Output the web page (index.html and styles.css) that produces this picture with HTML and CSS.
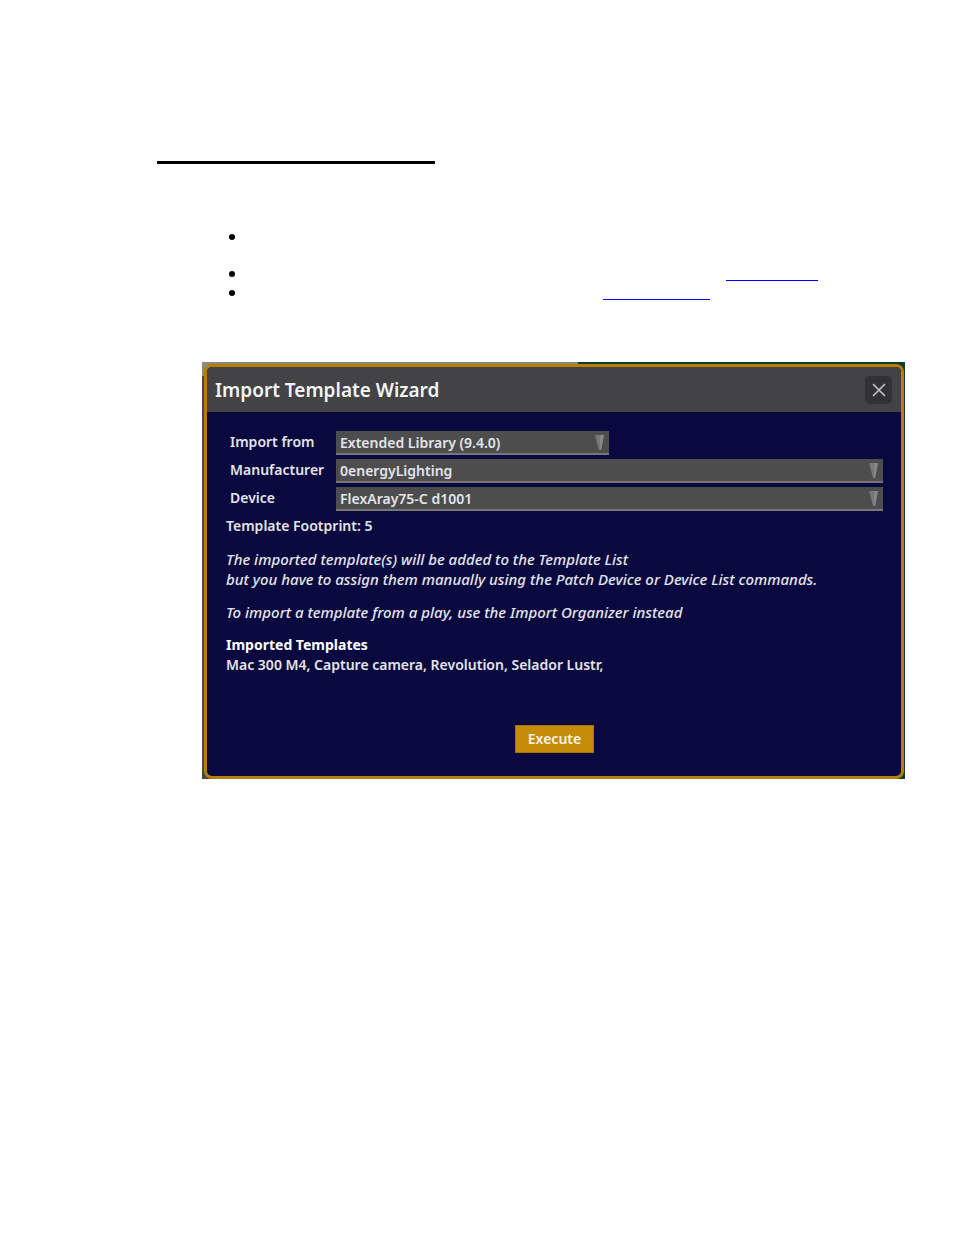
FILE: index.html
```
<!DOCTYPE html>
<html lang="en">
<head>
    <meta charset="UTF-8">
    <meta name="viewport" content="width=device-width, initial-scale=1.0">
    <title>Import Template Wizard</title>
    <link rel="stylesheet" href="styles.css">
</head>
<body>

<main class="page">
    <div class="title-rule"></div>

    <ul class="notes">
        <li class="tall"></li>
        <li><a href="#" class="link-first" aria-label="Template List"></a></li>
        <li><a href="#" class="link-second" aria-label="Import Organizer"></a></li>
    </ul>

    <div class="stage">
        <section class="wizard">
            <header class="wizard-header">
                <h1>Import Template Wizard</h1>
                <button type="button" class="close" aria-label="Close">
                    <svg width="14" height="14" viewBox="0 0 14 14"><path d="M1 1 L13 13 M13 1 L1 13" stroke="#c4c4c6" stroke-width="1.6" fill="none"/></svg>
                </button>
            </header>

            <form class="wizard-body">
                <div class="row">
                    <label for="source">Import from</label>
                    <div class="select short">
                        <select id="source"><option>Extended Library (9.4.0)</option></select>
                        <svg class="arrow" width="10" height="16" viewBox="0 0 10 16"><path d="M0 0 H9 L6 15 H4 Z" fill="#77777b"/><path d="M5 0 H9 L6 15 H5 Z" fill="#88888c"/></svg>
                    </div>
                </div>
                <div class="row">
                    <label for="manufacturer">Manufacturer</label>
                    <div class="select">
                        <select id="manufacturer"><option>0energyLighting</option></select>
                        <svg class="arrow" width="10" height="16" viewBox="0 0 10 16"><path d="M0 0 H9 L6 15 H4 Z" fill="#77777b"/><path d="M5 0 H9 L6 15 H5 Z" fill="#88888c"/></svg>
                    </div>
                </div>
                <div class="row">
                    <label for="device">Device</label>
                    <div class="select">
                        <select id="device"><option>FlexAray75-C d1001</option></select>
                        <svg class="arrow" width="10" height="16" viewBox="0 0 10 16"><path d="M0 0 H9 L6 15 H4 Z" fill="#77777b"/><path d="M5 0 H9 L6 15 H5 Z" fill="#88888c"/></svg>
                    </div>
                </div>

                <div class="info">
                    <p>Template Footprint: 5</p>
                    <p class="hint">The imported template(s) will be added to the Template List<br>but you have to assign them manually using the Patch Device or Device List commands.</p>
                    <p class="hint">To import a template from a play, use the Import Organizer instead</p>
                    <h2>Imported Templates</h2>
                    <p>Mac 300 M4, Capture camera, Revolution, Selador Lustr,</p>
                </div>

                <button type="button" class="execute">Execute</button>
            </form>
        </section>
    </div>
</main>

</body>
</html>
```

FILE: styles.css
```
* {
    box-sizing: border-box;
}

body {
    margin: 0;
    background-color: #fff;
    color: #e4e4ea;
    font-family: "Noto Sans", "Open Sans", sans-serif;
    font-size: 14px;
    line-height: 20px;
}

h1, h2, p {
    margin: 0;
}

.page {
    padding: 161px 49px 0 157px;
}

.title-rule {
    width: 278px;
    height: 3px;
    background-color: #000;
}

/* Bullet list above the wizard */
.notes {
    list-style: none;
    margin: 63px 0 0 72px;
    padding: 0;
}

.notes li {
    display: flex;
    height: 19px;
}

.notes li::before {
    content: "";
    width: 6px;
    height: 6px;
    margin-top: 7px;
    border-radius: 50%;
    background-color: #000;
}

.notes .tall {
    height: 37px;
}

.notes a {
    height: 17px;
    border-bottom: 1px solid #0000ff;
}

.link-first {
    width: 92px;
    margin-left: 491px;
}

.link-second {
    width: 107px;
    margin-left: 368px;
}

/* Strip of the desk visible behind the wizard */
.stage {
    margin: 60px 0 0 45px;
    padding: 2px 1px 0 2px;
    background: linear-gradient(to right, #8a8a80 376px, #123c2c 376px) top / 100% 14px no-repeat, linear-gradient(to right, #48484a 50%, #123c2c 50%);
}

.wizard {
    border: 3px solid #b57f05;
    border-radius: 8px;
    background-color: #09083f;
    overflow: hidden;
}

.wizard-header {
    display: flex;
    align-items: center;
    justify-content: space-between;
    height: 45px;
    padding: 0 9px 0 8px;
    background-color: #434244;
}

.wizard-header h1 {
    color: #f4f4f4;
    font-size: 19px;
    font-weight: 600;
    line-height: 24px;
}

.close {
    display: flex;
    align-items: center;
    justify-content: center;
    width: 27px;
    height: 28px;
    padding: 0;
    border: none;
    border-radius: 5px;
    background-color: #323234;
}

.wizard-body {
    display: flex;
    flex-direction: column;
    gap: 4px;
    padding: 19px 18px 23px 19px;
}

.row {
    display: flex;
    padding-left: 4px;
}

.row label {
    width: 106px;
    font-weight: 600;
    line-height: 22px;
}

.select {
    position: relative;
    flex: 1;
}

.select.short {
    flex: 0 0 50%;
    max-width: 273px;
}

.select select {
    display: block;
    width: 100%;
    height: 24px;
    padding: 1px 20px 0 4px;
    border: none;
    border-bottom: 2px solid #77777a;
    border-radius: 0;
    background-color: #4d4d4d;
    color: #e4e4ea;
    font: 600 14px/20px "Noto Sans", "Open Sans", sans-serif;
    appearance: none;
}

.arrow {
    position: absolute;
    top: 4px;
    right: 4px;
    pointer-events: none;
}

.info {
    margin-top: 1px;
    font-weight: 600;
}

.info .hint {
    margin: 13px 0;
    font-size: 15px;
    font-style: italic;
    font-weight: 500;
}

.info h2 {
    color: #fff;
    font-size: 14px;
    font-weight: 700;
    line-height: 20px;
}

.execute {
    align-self: center;
    width: 79px;
    height: 28px;
    margin-top: 46px;
    padding: 0;
    border: 1px solid #a87503;
    background-color: #c48c08;
    color: #f8f4e8;
    font: 600 14px/20px "Noto Sans", "Open Sans", sans-serif;
}
```
